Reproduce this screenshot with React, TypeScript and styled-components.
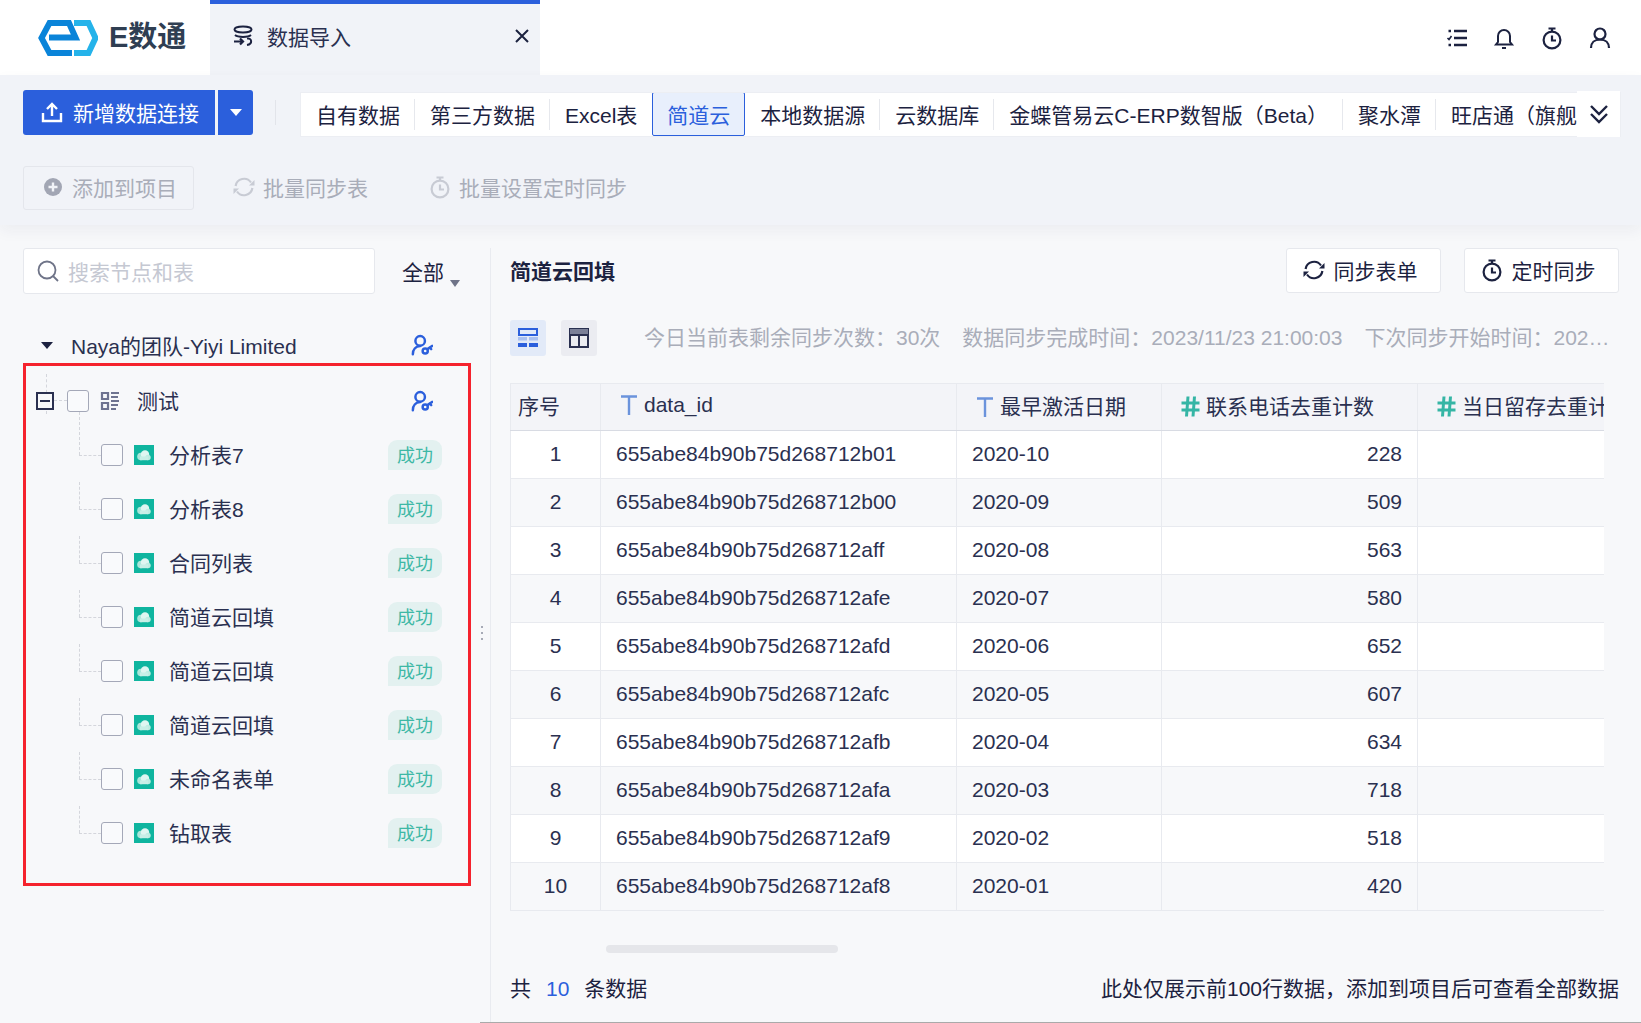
import React from 'react';
import styled, { createGlobalStyle } from 'styled-components';

const Global = createGlobalStyle`
  html, body { margin: 0; padding: 0; background: #fff; }
  body { font-family: "Liberation Sans", "Noto Sans CJK SC", sans-serif; font-size: 21px; color: #1c2240; }
  * { box-sizing: border-box; }
  #root { width: 100vw; height: 100vh; overflow: hidden; }
`;

const Page = styled.div`display:flex;flex-direction:column;height:1023px;width:1641px;position:relative;background:#f7f8fa;`;
const Header = styled.header`display:flex;align-items:stretch;height:75px;background:#fff;flex:none;`;
const LogoArea = styled.div`width:210px;display:flex;align-items:center;padding-left:38px;gap:11px;`;
const LogoText = styled.span`font-size:29px;font-weight:700;color:#2f3e52;line-height:1;padding-bottom:1px;`;
const Tab = styled.div`width:330px;background:#f1f3f8;border-top:4px solid #2b5fdc;display:flex;align-items:center;padding:0 10px 7px 22px;gap:13px;`;
const TabLabel = styled.span`flex:1;color:#2a3050;`;
const HeaderIcons = styled.div`margin-left:auto;display:flex;align-items:center;gap:24px;padding-right:29px;color:#1c2240;`;

const Toolbar = styled.section`flex:none;height:150px;background:#f1f3f8;box-shadow:0 6px 14px rgba(30,40,80,.05);padding:15px 21px 0 23px;position:relative;z-index:1;`;
const ToolRow = styled.div`display:flex;align-items:flex-start;`;
const PrimaryBtn = styled.button`height:45px;width:192px;border:0;border-radius:3px 0 0 3px;background:#2b5fdc;color:#fff;font:inherit;display:flex;align-items:center;justify-content:center;gap:10px;padding:0 0 2px 2px;`;
const DropBtn = styled.button`height:45px;width:35px;margin-left:3px;border:0;border-radius:0 3px 3px 0;background:#2b5fdc;display:flex;align-items:center;justify-content:center;padding:0;`;
const Triangle = styled.i<{ $c: string; $w?: number; $h?: number }>`display:block;width:0;height:0;border-left:${p => p.$w ?? 6}px solid transparent;border-right:${p => p.$w ?? 6}px solid transparent;border-top:${p => p.$h ?? 7}px solid ${p => p.$c};`;
const Sep = styled.div`width:1px;height:25px;background:#e2e4ea;margin:10px 25px 0 22px;`;
const TabBar = styled.nav`flex:1;min-width:0;display:flex;height:43px;margin-top:3px;background:#fff;box-shadow:0 0 0 1px #eceef3;`;
const TabScroll = styled.div`flex:1;min-width:0;overflow:hidden;display:flex;align-items:stretch;white-space:nowrap;`;
const SourceTab = styled.div<{ $active?: boolean; $noline?: boolean }>`flex:none;position:relative;padding:0 ${p => (p.$active ? 14 : 15)}px 1px;display:flex;align-items:center;color:${p => (p.$active ? '#2b5fdc' : '#1c2240')};
  ${p => p.$active ? 'background:#e8effc;border:1px solid #2b5fdc;border-radius:2px;margin:-1px 0 0;' : ''}
  &::after{content:${p => (p.$noline || p.$active ? 'none' : '""')};position:absolute;right:0;top:6px;bottom:6px;width:1px;background:#e6e8ed;}
`;
const ChevronBox = styled.div`flex:none;width:43px;height:46px;margin-top:-2px;background:#fff;display:flex;align-items:center;justify-content:center;color:#1c2240;position:relative;`;
const ActionRow = styled.div`display:flex;align-items:center;margin-top:30px;height:44px;`;
const ActionBox = styled.div`width:171px;height:44px;border:1px solid #e4e6ec;border-radius:3px;display:flex;align-items:center;padding:0 0 2px 19px;gap:9px;color:#a9adb9;`;
const ActionPlain = styled.div<{ $gap: number }>`display:flex;align-items:center;gap:7px;padding-bottom:2px;color:#a9adb9;margin-left:${p => p.$gap}px;`;

const Body = styled.main`flex:1;min-height:0;display:flex;`;
const Left = styled.aside`width:491px;flex:none;padding:23px 0 0 23px;position:relative;`;
const Divider = styled.div`position:absolute;right:0;top:23px;bottom:0;width:1px;background:#e9ebf0;`;
const Grip = styled.div`position:absolute;right:8px;top:401px;width:2px;height:18px;background:repeating-linear-gradient(#a6aab6 0 2px,transparent 2px 6px);`;
const SearchRow = styled.div`display:flex;align-items:center;`;
const SearchBox = styled.div`width:352px;height:46px;background:#fff;border:1px solid #e6e8ed;border-radius:3px;display:flex;align-items:center;padding:0 0 1px 13px;gap:9px;color:#c5c8d2;`;
const Filter = styled.div`display:flex;margin-left:27px;gap:6px;color:#1c2240;`;
const FilterCaret = styled.span`padding-top:24px;`;
const TeamRow = styled.div`display:flex;align-items:center;height:54px;margin-top:25px;padding:0 0 2px 18px;color:#2a3050;position:relative;`;
const TeamName = styled.span`margin-left:18px;flex:1;`;
const UserSlot = styled.span`width:80px;color:#2b5fdc;display:flex;`;
const Tree = styled.div`position:relative;margin-top:1px;`;
const TreeRow = styled.div<{ $child?: boolean; $first?: boolean }>`display:flex;align-items:center;height:54px;position:relative;padding:0 0 1px ${p => (p.$child ? 78 : 13)}px;color:#2a3050;
  ${p => p.$child ? `&::before{content:"";position:absolute;left:56px;top:27px;width:22px;border-top:1px dashed #d4d6dc;}
  &::after{content:"";position:absolute;left:56px;top:${p.$first ? -16 : 0}px;height:${p.$first ? 43 : 27}px;border-left:1px dashed #d4d6dc;}` : ''}
`;
const RootLine = styled.i`position:absolute;left:23px;top:0;height:40px;border-left:1px dashed #d4d6dc;`;
const Expander = styled.span`width:18px;height:18px;border:2px solid #2a3050;background:#f7f8fa;position:relative;z-index:1;display:flex;align-items:center;justify-content:center;flex:none;
  &::before{content:"";width:10px;height:2px;background:#2a3050;}
`;
const Dash = styled.i`width:13px;border-top:1px dashed #d4d6dc;flex:none;`;
const Check = styled.span`width:22px;height:22px;border:1px solid #a4a8b8;border-radius:3px;background:#f9fafc;flex:none;`;
const IconSlot = styled.span<{ $ml: number }>`display:flex;margin-left:${p => p.$ml}px;flex:none;`;
const NodeName = styled.span<{ $ml: number }>`margin:0 0 2px ${p => p.$ml}px;flex:1;`;
const Badge = styled.span`width:54px;height:30px;border-radius:9px 9px 9px 0;background:#e3f1f0;color:#3eb8a5;font-size:18px;display:flex;align-items:center;justify-content:center;margin-right:49px;padding-bottom:1px;`;
const RedFrame = styled.div`position:absolute;left:23px;top:363px;width:448px;height:523px;border:3px solid #f5222d;pointer-events:none;z-index:2;`;

const Right = styled.section`flex:1;min-width:0;padding:23px 22px 0 19px;`;
const TitleRow = styled.div`display:flex;align-items:center;height:45px;gap:23px;`;
const Title = styled.h2`margin:0 0 2px;font-size:21px;font-weight:700;flex:1;color:#1c2240;`;
const OutBtn = styled.button`width:155px;height:45px;background:#fff;border:1px solid #e6e8ed;border-radius:3px;font:inherit;color:#1c2240;display:flex;align-items:center;justify-content:center;gap:8px;padding:0 8px 2px 0;`;
const ViewRow = styled.div`display:flex;align-items:center;margin-top:27px;height:36px;`;
const ViewBtn = styled.span<{ $on?: boolean }>`width:36px;height:36px;border-radius:3px;display:flex;align-items:center;justify-content:center;margin-right:15px;background:${p => (p.$on ? '#e2eaf8' : '#ebecf1')};`;
const Meta = styled.div`flex:1;min-width:0;margin:0 9px 4px 32px;white-space:nowrap;overflow:hidden;text-overflow:ellipsis;color:#a9adb9;`;
const MetaItem = styled.span`margin-right:22px;`;
const TableWrap = styled.div`margin:27px 15px 0 0;overflow:hidden;`;
const Table = styled.table`border-collapse:collapse;table-layout:fixed;width:1163px;font-size:21px;`;
const Th = styled.th`height:47px;padding:0 0 4px 19px;background:#f3f4f8;border:1px solid #e8eaef;border-bottom:1px solid #d8dbe3;font-weight:400;text-align:left;white-space:nowrap;overflow:hidden;color:#2a3050;`;
const SeqTh = styled(Th)`padding-left:7px;`;
const TypeIcon = styled.svg`margin-right:6px;vertical-align:-3px;`;
const Tr = styled.tr<{ $even: boolean }>`background:${p => (p.$even ? '#f7f8fa' : '#fff')};`;
const Td = styled.td<{ $align?: string }>`height:48px;padding:0 15px 2px;border:1px solid #e8eaef;color:#2a3050;text-align:${p => p.$align ?? 'left'};white-space:nowrap;`;
const ScrollThumb = styled.div`width:232px;height:8px;margin:34px 0 0 96px;border-radius:4px;background:#e5e6ea;`;
const Footer = styled.footer`display:flex;justify-content:space-between;align-items:center;height:28px;margin-top:20px;color:#1c2240;`;
const Count = styled.span`color:#2b5fdc;margin:0 15px;`;
const BottomEdge = styled.div`position:absolute;left:480px;right:0;bottom:0;height:1px;background:#aaa;`;

const Refresh = ({ s = 24, c = 'currentColor' }: { s?: number; c?: string }) => (
  <svg width={s} height={s} viewBox="0 0 24 24" fill="none" stroke={c} strokeWidth="2.2">
    <path d="M3.6 11A8.5 8.5 0 0 1 19 7.5" />
    <path d="M20.4 13A8.5 8.5 0 0 1 5 16.5" />
    <path d="M17 10.5h5.5V5z" fill={c} stroke="none" />
    <path d="M7 13.5H1.5V19z" fill={c} stroke="none" />
  </svg>
);
const Timer = ({ s = 24, c = 'currentColor' }: { s?: number; c?: string }) => (
  <svg width={s} height={s} viewBox="0 0 24 24" fill="none" stroke={c} strokeWidth="2.2">
    <circle cx="12" cy="14" r="8.4" />
    <path d="M8.5 2.5h7M12 3v3M12 9.5V14.5H16" />
  </svg>
);
const UserKey = () => (
  <svg width="22" height="22" viewBox="0 0 24 24" fill="none" stroke="currentColor" strokeWidth="2.7" strokeLinecap="round">
    <circle cx="10" cy="7.5" r="5.2" />
    <path d="M2 22c0-5 3-8.500 8-8.800" />
    <circle cx="15.500" cy="18.500" r="2.800" />
    <path d="M18 16.500L23 13M20.500 14.500l1.500 2" />
  </svg>
);
const Cloud = () => (
  <svg width="20" height="20" viewBox="0 0 20 20">
    <rect width="20" height="20" fill="#0fb59f" />
    <circle cx="7" cy="11.500" r="3.800" fill="#a9e6da" />
    <circle cx="11" cy="9.500" r="4.200" fill="#dff6f1" />
    <circle cx="14" cy="12.500" r="2.700" fill="#bfece2" />
    <rect x="6" y="11.500" width="8" height="3.700" fill="#c8efe7" />
  </svg>
);
const TIcon = () => (
  <TypeIcon width="18" height="20" viewBox="0 0 18 20" fill="none" stroke="#6b93dc" strokeWidth="2.4">
    <path d="M1 1.500h16M9 1.500V20" />
  </TypeIcon>
);
const NumIcon = () => (
  <TypeIcon width="19" height="21" viewBox="0 0 19 21" fill="none" stroke="#35b5a5" strokeWidth="3">
    <path d="M0.500 7h18M0.500 14h18M7 0.500L5.500 20.500M13.500 0.500L12 20.500" />
  </TypeIcon>
);

const children = ['分析表7', '分析表8', '合同列表', '简道云回填', '简道云回填', '简道云回填', '未命名表单', '钻取表'];
const rows: [string, string, string][] = [
  ['b01', '2020-10', '228'], ['b00', '2020-09', '509'], ['aff', '2020-08', '563'], ['afe', '2020-07', '580'], ['afd', '2020-06', '652'],
  ['afc', '2020-05', '607'], ['afb', '2020-04', '634'], ['afa', '2020-03', '718'], ['af9', '2020-02', '518'], ['af8', '2020-01', '420'],
];
const sources = ['自有数据', '第三方数据', 'Excel表', '简道云', '本地数据源', '云数据库', '金蝶管易云C-ERP数智版（Beta）', '聚水潭', '旺店通（旗舰版）'];

export default function App() {
  return (
    <Page>
      <Global />
      <Header>
        <LogoArea>
          <svg width="60" height="36" viewBox="0 0 60 36" fill="none" strokeWidth="6">
            <path d="M34 33H11.500L3.500 18 11.500 3H31L37.500 17.500H11" stroke="#0a84d9" />
            <path d="M36 3H50.500L57.500 18 50.500 33H36" stroke="#25b3ea" />
          </svg>
          <LogoText>E数通</LogoText>
        </LogoArea>
        <Tab>
          <svg width="22" height="22" viewBox="0 0 22 22" fill="none" stroke="#1c2240" strokeWidth="2">
            <ellipse cx="11" cy="4.500" rx="8.500" ry="3" />
            <path d="M3 10c3 2.500 13 2.500 16 0" />
            <path d="M2 16.500h9M8 13.500l3 3-3 3" strokeWidth="2.200" />
            <path d="M15 13.500c5-1 6 5.500 0 6.500" />
          </svg>
          <TabLabel>数据导入</TabLabel>
          <svg width="16" height="16" viewBox="0 0 16 16" stroke="#1c2240" strokeWidth="2"><path d="M2 2l12 12M14 2L2 14" /></svg>
        </Tab>
        <HeaderIcons>
          <svg width="22" height="22" viewBox="0 0 22 22" fill="none" stroke="#1c2240" strokeWidth="2.600">
            <path d="M8 4h13M8 11h13M8 18h13M2.500 4h2.500M2.500 18h2.500" />
            <path d="M1.500 11l1.500 1.500L5.500 9" strokeWidth="1.600" />
          </svg>
          <svg width="24" height="24" viewBox="0 0 24 24" fill="none" stroke="#1c2240" strokeWidth="2">
            <path d="M4 18.500h16l-2-2.500V10a6 6 0 0 0-12 0v6zM10 22h4" />
          </svg>
          <Timer />
          <svg width="24" height="24" viewBox="0 0 24 24" fill="none" stroke="#1c2240" strokeWidth="2.200">
            <circle cx="12" cy="8" r="5.500" />
            <path d="M3 22c0-5 3.500-8.500 9-8.500s9 3.500 9 8.500" />
          </svg>
        </HeaderIcons>
      </Header>

      <Toolbar>
        <ToolRow>
          <PrimaryBtn>
            <svg width="22" height="22" viewBox="0 0 22 22" fill="none" stroke="#fff" strokeWidth="2.400">
              <path d="M11 15V3M6 8l5-5 5 5M2 12v8h18v-8" />
            </svg>
            新增数据连接
          </PrimaryBtn>
          <DropBtn><Triangle $c="#fff" /></DropBtn>
          <Sep />
          <TabBar>
            <TabScroll>
              {sources.map((t, i) => <SourceTab key={t} $active={i === 3} $noline={i === 2}>{t}</SourceTab>)}
            </TabScroll>
            <ChevronBox>
              <svg width="22" height="22" viewBox="0 0 22 22" fill="none" stroke="#1c2240" strokeWidth="2.400">
                <path d="M3 3l8 8 8-8M3 11l8 8 8-8" />
              </svg>
            </ChevronBox>
          </TabBar>
        </ToolRow>
        <ActionRow>
          <ActionBox>
            <svg width="20" height="20" viewBox="0 0 20 20">
              <circle cx="10" cy="10" r="9" fill="#a2a6b4" />
              <path d="M10 5.500v9M5.500 10h9" stroke="#f1f3f8" strokeWidth="2.400" />
            </svg>
            添加到项目
          </ActionBox>
          <ActionPlain $gap={38}><Refresh c="#c8cbd4" />批量同步表</ActionPlain>
          <ActionPlain $gap={60}><Timer c="#c8cbd4" />批量设置定时同步</ActionPlain>
        </ActionRow>
      </Toolbar>

      <Body>
        <Left>
          <Divider />
          <Grip />
          <SearchRow>
            <SearchBox>
              <svg width="22" height="22" viewBox="0 0 22 22" fill="none" stroke="#6f7488" strokeWidth="1.800">
                <circle cx="10" cy="10" r="8.500" /><path d="M16 16l5 5" />
              </svg>
              搜索节点和表
            </SearchBox>
            <Filter>全部<FilterCaret><Triangle $c="#6f7488" $w={5.5} $h={7} /></FilterCaret></Filter>
          </SearchRow>
          <TeamRow>
            <Triangle $c="#1c2240" />
            <TeamName>Naya的团队-Yiyi Limited</TeamName>
            <UserSlot><UserKey /></UserSlot>
          </TeamRow>
          <Tree>
            <TreeRow>
              <RootLine />
              <Expander /><Dash />
              <Check />
              <IconSlot $ml={11}>
                <svg width="20" height="20" viewBox="0 0 20 20" fill="none" stroke="#6e7390" strokeWidth="2.200">
                  <path d="M2 2h6v6H2zM2 12h6v6H2zM11 2h8M11 6h7M11 10h8M11 14h7M11 18h5" />
                </svg>
              </IconSlot>
              <NodeName $ml={17}>测试</NodeName>
              <UserSlot><UserKey /></UserSlot>
            </TreeRow>
            {children.map((c, i) => (
              <TreeRow $child $first={i === 0} key={i}>
                <Check />
                <IconSlot $ml={11}><Cloud /></IconSlot>
                <NodeName $ml={15}>{c}</NodeName>
                <Badge>成功</Badge>
              </TreeRow>
            ))}
          </Tree>
        </Left>
        <Right>
          <TitleRow>
            <Title>简道云回填</Title>
            <OutBtn><Refresh />同步表单</OutBtn>
            <OutBtn><Timer />定时同步</OutBtn>
          </TitleRow>
          <ViewRow>
            <ViewBtn $on>
              <svg width="20" height="20" viewBox="0 0 20 20">
                <rect x="1" y="1" width="18" height="6" fill="none" stroke="#2b5fdc" strokeWidth="2" />
                <rect y="9" width="9" height="3.500" fill="#a9c0f0" /><rect x="11" y="9" width="9" height="3.500" fill="#a9c0f0" />
                <rect y="15" width="9" height="4" fill="#2b5fdc" /><rect x="11" y="15" width="9" height="4" fill="#2b5fdc" />
              </svg>
            </ViewBtn>
            <ViewBtn>
              <svg width="20" height="20" viewBox="0 0 20 20">
                <rect x="1" y="1" width="18" height="18" fill="none" stroke="#2a3050" strokeWidth="2" />
                <rect x="1" y="1" width="18" height="6" fill="#7b8098" />
                <path d="M10 7v12M1 7h18" stroke="#2a3050" strokeWidth="2" />
              </svg>
            </ViewBtn>
            <Meta>
              <MetaItem>今日当前表剩余同步次数：30次</MetaItem>
              <MetaItem>数据同步完成时间：2023/11/23 21:00:03</MetaItem>
              下次同步开始时间：2023/11/24 21:00:03
            </Meta>
          </ViewRow>
          <TableWrap>
            <Table>
              <colgroup>
                <col style={{ width: 90 }} /><col style={{ width: 356 }} /><col style={{ width: 205 }} /><col style={{ width: 256 }} /><col style={{ width: 256 }} />
              </colgroup>
              <thead>
                <tr>
                  <SeqTh>序号</SeqTh>
                  <Th><TIcon />data_id</Th>
                  <Th><TIcon />最早激活日期</Th>
                  <Th><NumIcon />联系电话去重计数</Th>
                  <Th><NumIcon />当日留存去重计数</Th>
                </tr>
              </thead>
              <tbody>
                {rows.map((r, i) => (
                  <Tr $even={i % 2 === 1} key={i}>
                    <Td $align="center">{i + 1}</Td>
                    <Td>655abe84b90b75d268712{r[0]}</Td>
                    <Td>{r[1]}</Td>
                    <Td $align="right">{r[2]}</Td>
                    <Td />
                  </Tr>
                ))}
              </tbody>
            </Table>
          </TableWrap>
          <ScrollThumb />
          <Footer>
            <span>共<Count>10</Count>条数据</span>
            <span>此处仅展示前100行数据，添加到项目后可查看全部数据</span>
          </Footer>
        </Right>
      </Body>
      <RedFrame />
      <BottomEdge />
    </Page>
  );
}
